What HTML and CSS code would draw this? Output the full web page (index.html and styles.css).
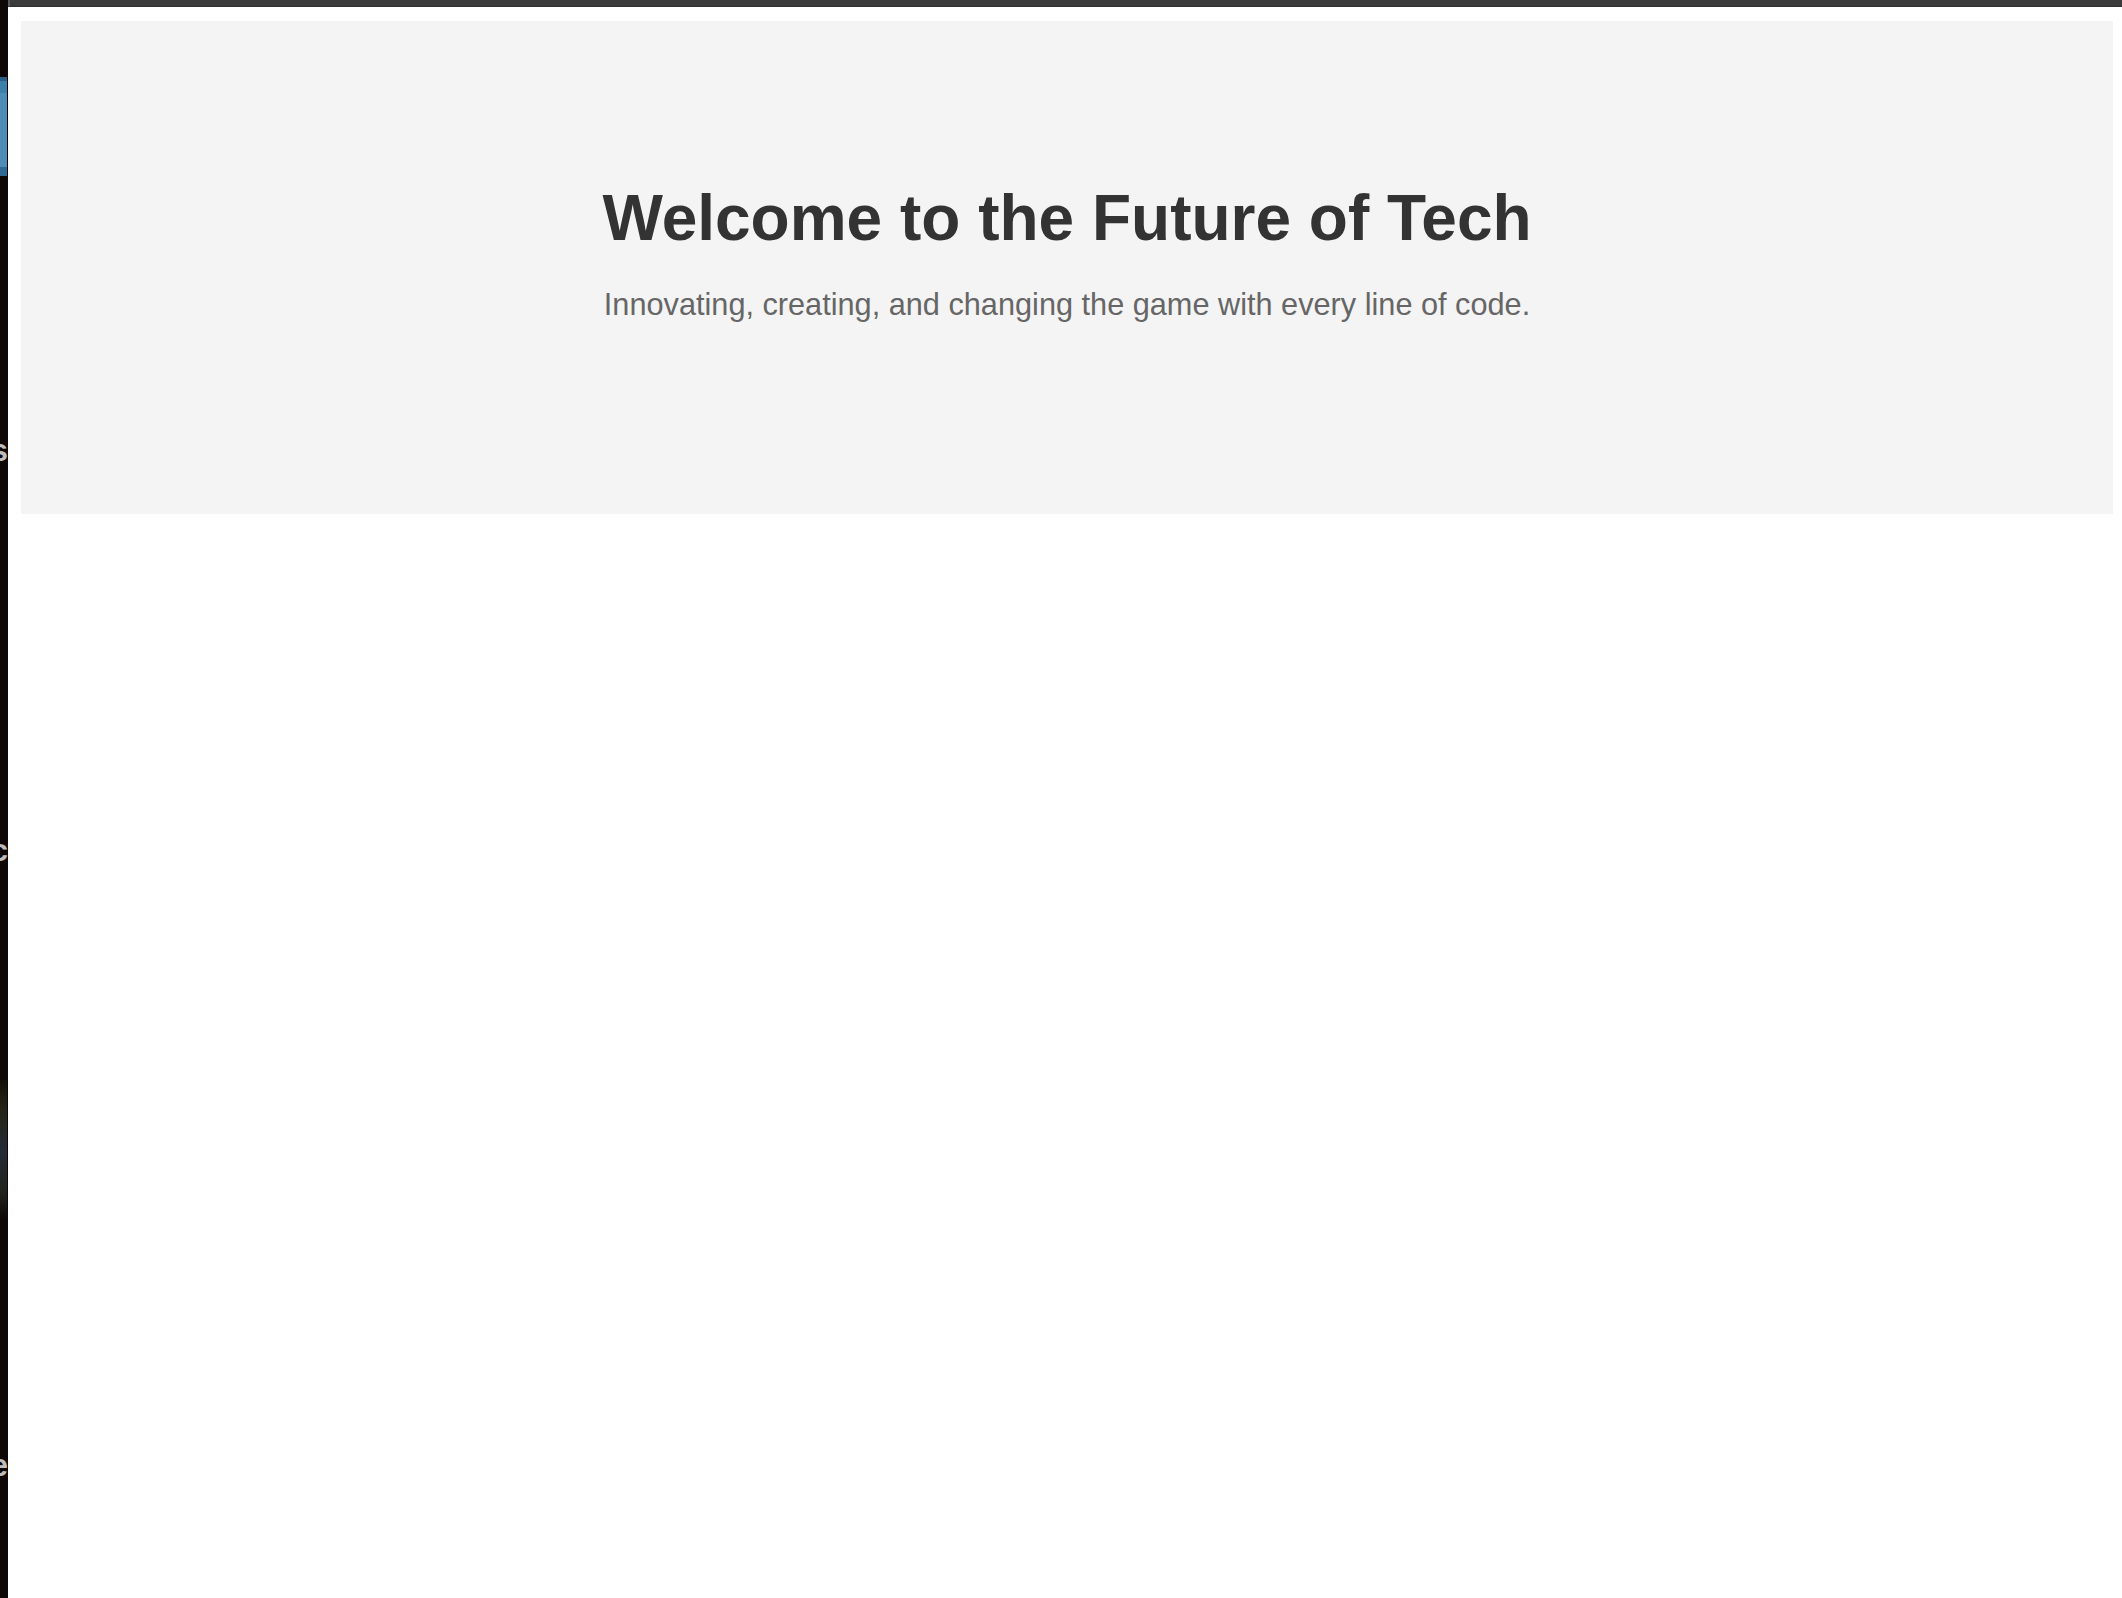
FILE: index.html
```html
<!DOCTYPE html>
<html lang="en">
<head>
<meta charset="utf-8">
<title>Welcome to the Future of Tech</title>
<link rel="stylesheet" href="styles.css">
</head>
<body>
<div class="screen">
  <aside class="edge">
    <div class="edge-block"></div>
    <span class="edge-letter edge-s">s</span>
    <span class="edge-letter edge-c">c</span>
    <div class="edge-image"></div>
    <span class="edge-letter edge-e">e</span>
  </aside>
  <div class="window">
    <div class="topbar"></div>
    <main class="page">
      <section class="hero">
        <h1 class="hero-title">Welcome to the Future of Tech</h1>
        <p class="hero-sub">Innovating, creating, and changing the game with every line of code.</p>
      </section>
    </main>
  </div>
</div>
</body>
</html>
```

FILE: styles.css
```css
html, body {
  margin: 0;
  padding: 0;
  background: #ffffff;
}

.screen {
  display: flex;
  width: 2122px;
  height: 1598px;
  overflow: hidden;
}

.edge {
  position: relative;
  flex: 0 0 8px;
  width: 8px;
  background: #0d0707;
  overflow: hidden;
}

.edge-block {
  position: absolute;
  left: 0;
  top: 77px;
  width: 7px;
  height: 99px;
  background: linear-gradient(#2d5f86 0 4px, #3f7fab 4px 16px, #4d8db8 16px 90px, #2f6a95 90px);
}

.edge-image {
  position: absolute;
  left: 0;
  top: 1080px;
  width: 7px;
  height: 140px;
  background: linear-gradient(#141308, #2a2c18 20%, #2b3440 50%, #262a24 80%, #0d0707);
  opacity: 0.8;
}

.edge-letter {
  position: absolute;
  right: 0;
  font-family: "Liberation Sans", Arial, sans-serif;
  font-weight: bold;
  font-size: 31px;
  line-height: 31px;
  color: #bdbdbd;
}

.edge-s { top: 435px; }
.edge-c { top: 835px; }
.edge-e { top: 1450px; }

.window {
  flex: 1 1 auto;
  display: flex;
  flex-direction: column;
  min-width: 0;
}

.topbar {
  height: 7px;
  flex: 0 0 7px;
  background: #3b3b3b;
  border-left: 2px solid #5a5a5a;
  border-bottom: 1px solid #303030;
  box-sizing: border-box;
}

.page {
  padding: 14px 9px 0 13px;
}

.hero {
  background: #f4f4f4;
  height: 493px;
  box-sizing: border-box;
  padding-top: 160px;
  text-align: center;
}

.hero-title {
  margin: 0;
  font-family: "Liberation Sans", Arial, sans-serif;
  font-weight: bold;
  font-size: 64px;
  line-height: 74px;
  color: #333333;
}

.hero-sub {
  margin: 32px 0 0;
  font-family: "Liberation Sans", Arial, sans-serif;
  font-size: 30.7px;
  line-height: 35px;
  color: #666666;
}
```
